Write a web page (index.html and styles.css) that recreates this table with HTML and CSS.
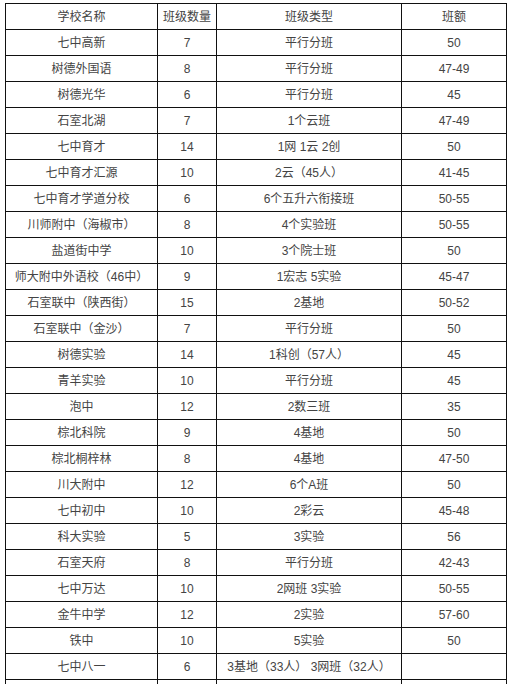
FILE: index.html
```html
<!DOCTYPE html>
<html lang="zh">
<head>
<meta charset="utf-8">
<title>学校班级</title>
<link rel="stylesheet" href="styles.css">
</head>
<body>
<div class="table">
  <div class="cell">学校名称</div><div class="cell">班级数量</div><div class="cell">班级类型</div><div class="cell">班额</div>
  <div class="cell">七中高新</div><div class="cell">7</div><div class="cell">平行分班</div><div class="cell">50</div>
  <div class="cell">树德外国语</div><div class="cell">8</div><div class="cell">平行分班</div><div class="cell">47-49</div>
  <div class="cell">树德光华</div><div class="cell">6</div><div class="cell">平行分班</div><div class="cell">45</div>
  <div class="cell">石室北湖</div><div class="cell">7</div><div class="cell">1个云班</div><div class="cell">47-49</div>
  <div class="cell">七中育才</div><div class="cell">14</div><div class="cell">1网 1云 2创</div><div class="cell">50</div>
  <div class="cell">七中育才汇源</div><div class="cell">10</div><div class="cell">2云（45人）</div><div class="cell">41-45</div>
  <div class="cell">七中育才学道分校</div><div class="cell">6</div><div class="cell">6个五升六衔接班</div><div class="cell">50-55</div>
  <div class="cell">川师附中（海椒市）</div><div class="cell">8</div><div class="cell">4个实验班</div><div class="cell">50-55</div>
  <div class="cell">盐道街中学</div><div class="cell">10</div><div class="cell">3个院士班</div><div class="cell">50</div>
  <div class="cell">师大附中外语校（46中）</div><div class="cell">9</div><div class="cell">1宏志 5实验</div><div class="cell">45-47</div>
  <div class="cell">石室联中（陕西街）</div><div class="cell">15</div><div class="cell">2基地</div><div class="cell">50-52</div>
  <div class="cell">石室联中（金沙）</div><div class="cell">7</div><div class="cell">平行分班</div><div class="cell">50</div>
  <div class="cell">树德实验</div><div class="cell">14</div><div class="cell">1科创（57人）</div><div class="cell">45</div>
  <div class="cell">青羊实验</div><div class="cell">10</div><div class="cell">平行分班</div><div class="cell">45</div>
  <div class="cell">泡中</div><div class="cell">12</div><div class="cell">2数三班</div><div class="cell">35</div>
  <div class="cell">棕北科院</div><div class="cell">9</div><div class="cell">4基地</div><div class="cell">50</div>
  <div class="cell">棕北桐梓林</div><div class="cell">8</div><div class="cell">4基地</div><div class="cell">47-50</div>
  <div class="cell">川大附中</div><div class="cell">12</div><div class="cell">6个A班</div><div class="cell">50</div>
  <div class="cell">七中初中</div><div class="cell">10</div><div class="cell">2彩云</div><div class="cell">45-48</div>
  <div class="cell">科大实验</div><div class="cell">5</div><div class="cell">3实验</div><div class="cell">56</div>
  <div class="cell">石室天府</div><div class="cell">8</div><div class="cell">平行分班</div><div class="cell">42-43</div>
  <div class="cell">七中万达</div><div class="cell">10</div><div class="cell">2网班 3实验</div><div class="cell">50-55</div>
  <div class="cell">金牛中学</div><div class="cell">12</div><div class="cell">2实验</div><div class="cell">57-60</div>
  <div class="cell">铁中</div><div class="cell">10</div><div class="cell">5实验</div><div class="cell">50</div>
  <div class="cell">七中八一</div><div class="cell">6</div><div class="cell">3基地（33人） 3网班（32人）</div><div class="cell"></div>
  <div class="cell"></div><div class="cell"></div><div class="cell"></div><div class="cell"></div>
</div>
</body>
</html>
```

FILE: styles.css
```css
html, body {
  margin: 0;
  padding: 0;
  background: #ffffff;
}

body {
  padding: 3px 0 0 5px;
  font-family: "Liberation Sans", "Noto Sans CJK SC", sans-serif;
  font-size: 12px;
  color: #444444;
}

.table {
  display: grid;
  grid-template-columns: 152px 59px 185px 105px;
  grid-auto-rows: 26px;
  width: 501px;
  border-left: 1px solid #111111;
  border-top: 1px solid #111111;
}

.cell {
  box-sizing: border-box;
  border-right: 1px solid #111111;
  border-bottom: 1px solid #111111;
  display: flex;
  align-items: center;
  justify-content: center;
  white-space: nowrap;
  line-height: 1;
  padding-top: 1px;
}
```
